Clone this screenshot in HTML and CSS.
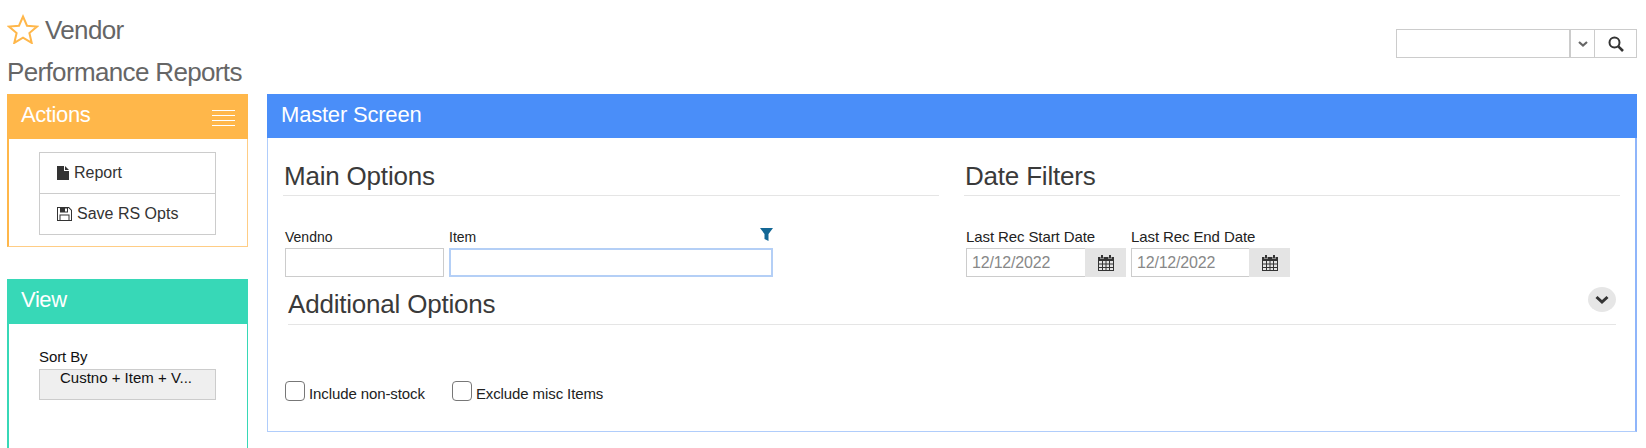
FILE: index.html
```html
<!DOCTYPE html>
<html lang="en">
<head>
<meta charset="utf-8">
<title>Vendor Performance Reports</title>
<link rel="stylesheet" href="styles.css">
</head>
<body>
<header class="top">
  <div class="title">
    <div class="title-line">
      <svg class="star" viewBox="0 0 32 30" width="32" height="30"><path d="M16 2.500l4 9.200 10 .9-7.600 6.500 2.300 9.800L16 23.700 7.300 28.900l2.300-9.800L2 12.600l10-.9z" fill="none" stroke="#ffb74a" stroke-width="2"/></svg>
      <span>Vendor</span>
    </div>
    <div class="title-sub">Performance Reports</div>
  </div>
  <div class="search">
    <div class="search-input"></div>
    <div class="search-drop"><svg viewBox="0 0 10 6" width="10" height="6"><path d="M1 1l4 3.500L9 1" fill="none" stroke="#666" stroke-width="2.200"/></svg></div>
    <div class="search-btn"><svg viewBox="0 0 16 16" width="16" height="16"><circle cx="6.500" cy="6.500" r="5" fill="none" stroke="#333" stroke-width="2"/><path d="M10.300 10.300l4.700 4.700" stroke="#333" stroke-width="2.600"/></svg></div>
  </div>
</header>
<div class="layout">
  <aside class="side">
    <section class="panel panel-actions">
      <div class="panel-head"><span>Actions</span>
        <span class="burger"><i></i><i></i><i></i><i></i></span>
      </div>
      <div class="panel-body actions-body">
        <div class="btn-group">
          <div class="btn"><svg viewBox="0 0 12 14" width="12" height="14"><path d="M0 0h7v5h5v9H0zM8 0l4 4H8z" fill="#333"/></svg><span>Report</span></div>
          <div class="btn"><svg viewBox="0 0 15 14" width="15" height="14"><path fill-rule="evenodd" d="M0 0h12l3 3v11H0zM1 1v12h1.500V7.500h10V13H14V3.500L11.500 1H11v4.500H3V1zM3.500 8.500V13h8V8.500zM8 1.500h2v3H8z" fill="#333"/></svg><span>Save RS Opts</span></div>
        </div>
      </div>
    </section>
    <section class="panel panel-view">
      <div class="panel-head"><span>View</span></div>
      <div class="panel-body view-body">
        <div class="sort-label">Sort By</div>
        <div class="sort-select">Custno + Item + V...</div>
      </div>
    </section>
  </aside>
  <main class="master">
    <div class="master-head">Master Screen</div>
    <div class="master-body">
      <div class="cols">
        <div class="col">
          <h2 class="section">Main Options</h2>
          <div class="fields">
            <div class="field vendno">
              <label>Vendno</label>
              <div class="input"></div>
            </div>
            <div class="field item">
              <label>Item<svg class="funnel" viewBox="0 0 13 13" width="13" height="13"><path d="M0 0h13L8.500 6v7l-4-2V6z" fill="#136795"/></svg></label>
              <div class="input focus"></div>
            </div>
          </div>
        </div>
        <div class="col col-date">
          <h2 class="section">Date Filters</h2>
          <div class="fields date-fields">
            <div class="field date">
              <label>Last Rec Start Date</label>
              <div class="date-group"><div class="date-input">12/12/2022</div><div class="addon"><svg viewBox="0 0 16 16" width="16" height="16"><path fill-rule="evenodd" d="M0 2h2.500v2h3V2h5v2h3V2H16v14H0zM1 6v2.500h3V6zM5 6v2.500h2.500V6zM8.500 6v2.500H11V6zM12 6v2.500h3V6zM1 9.500V12h3V9.500zM5 9.500V12h2.500V9.500zM8.500 9.500V12H11V9.500zM12 9.500V12h3V9.500zM1 13v2h3v-2zM5 13v2h2.500v-2zM8.500 13v2H11v-2zM12 13v2h3v-2zM3 0h2v3.500H3zM11 0h2v3.500h-2z" fill="#333"/></svg></div></div>
            </div>
            <div class="field date">
              <label>Last Rec End Date</label>
              <div class="date-group"><div class="date-input">12/12/2022</div><div class="addon"><svg viewBox="0 0 16 16" width="16" height="16"><path fill-rule="evenodd" d="M0 2h2.500v2h3V2h5v2h3V2H16v14H0zM1 6v2.500h3V6zM5 6v2.500h2.500V6zM8.500 6v2.500H11V6zM12 6v2.500h3V6zM1 9.500V12h3V9.500zM5 9.500V12h2.500V9.500zM8.500 9.500V12H11V9.500zM12 9.500V12h3V9.500zM1 13v2h3v-2zM5 13v2h2.500v-2zM8.500 13v2H11v-2zM12 13v2h3v-2zM3 0h2v3.500H3zM11 0h2v3.500h-2z" fill="#333"/></svg></div></div>
            </div>
          </div>
        </div>
      </div>
      <div class="additional">
        <h2 class="section">Additional Options</h2>
        <span class="collapse"><svg viewBox="0 0 14 10" width="14" height="10"><path d="M1.500 2l5.500 5 5.500-5" fill="none" stroke="#333" stroke-width="3"/></svg></span>
      </div>
      <div class="checks">
        <label class="check"><span class="box"></span>Include non-stock</label>
        <label class="check"><span class="box"></span>Exclude misc Items</label>
      </div>
    </div>
  </main>
</div>
</body>
</html>
```

FILE: styles.css
```css
* { box-sizing: border-box; }
html, body { margin: 0; height: 448px; overflow: hidden; background: #fff; }
body { font-family: "Liberation Sans", Arial, sans-serif; color: #222; font-size: 14px; }

.top { display: flex; justify-content: space-between; height: 94px; padding: 12px 9px 0 7px; }
.title { color: #666; font-size: 26px; letter-spacing: -0.65px; }
.title-line { display: flex; align-items: center; height: 36px; gap: 6px; }
.star { display: block; margin-top: -2px; }
.title-sub { margin-top: 9px; line-height: 30px; }
.search { display: flex; margin-top: 17px; width: 241px; height: 29px; border: 1px solid #ccc; }
.search-input { width: 174px; border-right: 2px solid #ccc; }
.search-drop { width: 24px; display: flex; align-items: center; justify-content: center; border-right: 1px solid #ccc; }
.search-btn { flex: 1; display: flex; align-items: center; justify-content: center; }

.layout { display: flex; padding-left: 7px; }
.side { width: 241px; flex: none; }
.panel-head { height: 45px; padding: 0 13px 0 14px; display: flex; justify-content: space-between; align-items: center; color: #fff; font-size: 22px; letter-spacing: -0.4px; }
.panel-head span:first-child { margin-top: -4px; }
.panel-body { border-style: solid; border-width: 0 1px 1px 2px; }
.panel-actions .panel-head { background: #ffb74a; }
.actions-body { height: 108px; padding: 13px 30px 0; border-color: #ffcd85; border-left-color: #ffb74a; }
.burger { display: flex; flex-direction: column; gap: 4px; width: 23px; margin-top: 2px; }
.burger i { display: block; height: 1px; background: #fff; }
.btn-group { border: 1px solid #ccc; width: 177px; }
.btn { height: 40px; display: flex; align-items: center; padding-left: 17px; gap: 5px; font-size: 16px; color: #333; }
.btn + .btn { border-top: 1px solid #ccc; height: 41px; }
.panel-view { margin-top: 32px; }
.panel-view .panel-head { background: #37d8b7; }
.view-body { height: 130px; padding: 24px 30px 0; border-color: #37d8b7; }
.sort-label { font-size: 15px; letter-spacing: -0.1px; line-height: 18px; margin-bottom: 3px; color: #111; }
.sort-select { width: 177px; height: 31px; border: 1px solid #ccc; background: #efefef; padding: 0 0 0 20px; font-size: 15px; line-height: 16px; color: #111; }

.master { margin-left: 19px; width: 1370px; height: 338px; border: 1px solid #b0cdfb; border-top: 0; border-right: 2px solid #8fb5fa; }
.master-head { height: 44px; margin-right: -2px; margin-left: -1px; background: #4a8ef9; color: #fff; font-size: 22px; letter-spacing: -0.2px; line-height: 42px; padding-left: 14px; }
.master-body { padding: 0 15px; }
.cols { display: flex; gap: 25px; }
.col { width: 656px; }
.section { margin: 0; height: 58px; padding: 24px 0 0 1px; font-weight: 400; font-size: 26px; line-height: 29px; letter-spacing: -0.2px; color: #3a3a3a; border-bottom: 1px solid #e5e5e5; }
.fields { display: flex; gap: 5px; padding: 31px 0 0 2px; }
.date-fields { gap: 5px; padding-left: 2px; }
label { display: block; }
.field label { position: relative; font-size: 14px; line-height: 20px; height: 21px; color: #222; }
.date label { font-size: 15px; letter-spacing: -0.1px; white-space: nowrap; }
.vendno { width: 159px; }
.item { width: 324px; }
.funnel { position: absolute; right: 0; top: 1px; }
.input { height: 29px; border: 1px solid #ccc; }
.input.focus { border: 2px solid #b4cff6; }
.date { width: 160px; }
.date + .date { width: 159px; }
.date-group { display: flex; height: 29px; background: #e4e4e4; }
.date-input { flex: 1; border: 1px solid #ccc; border-right-width: 0; background: #fff; padding: 0 0 0 5px; line-height: 27px; font-size: 16px; color: #888; letter-spacing: -0.2px; }
.addon { flex: none; width: 41px; display: flex; align-items: center; justify-content: center; }

.additional { position: relative; margin: 0 4px 0 5px; }
.additional .section { height: 48px; padding: 13px 0 0 0; }
.collapse { position: absolute; right: 0; top: 10px; width: 28px; height: 25px; border-radius: 50%; background: #e6e6e6; display: flex; align-items: center; justify-content: center; }
.checks { display: flex; gap: 27px; padding: 55px 0 0 2px; }
.check { display: flex; align-items: flex-end; gap: 4px; font-size: 15px; letter-spacing: -0.1px; line-height: 16px; height: 22px; color: #222; }
.box { width: 20px; height: 20px; margin-bottom: 1px; border: 1px solid #777; border-radius: 4px; background: #fff; }
```
